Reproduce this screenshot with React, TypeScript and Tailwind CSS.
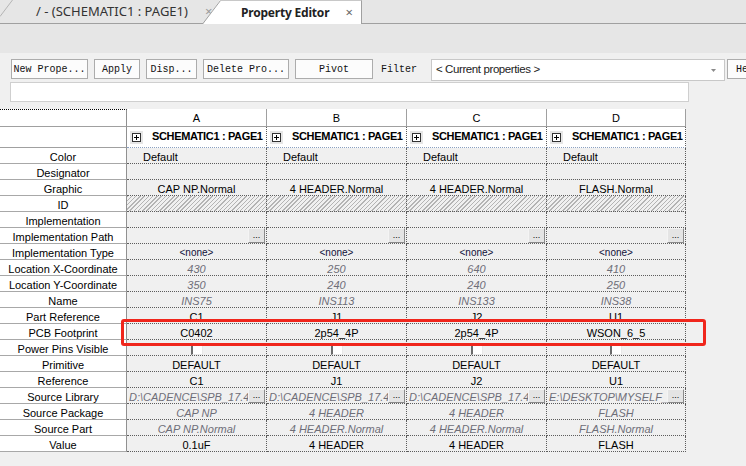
import React from 'react';

type Kind = 'plain' | 'left' | 'gray' | 'none' | 'lib' | 'dots' | 'check' | 'hatch' | 'empty';

type Row = { label: string; kind: Kind; values?: string[] };

const rows: Row[] = [
  { label: 'Color', kind: 'left', values: ['Default', 'Default', 'Default', 'Default'] },
  { label: 'Designator', kind: 'empty' },
  { label: 'Graphic', kind: 'plain', values: ['CAP NP.Normal', '4 HEADER.Normal', '4 HEADER.Normal', 'FLASH.Normal'] },
  { label: 'ID', kind: 'hatch' },
  { label: 'Implementation', kind: 'empty' },
  { label: 'Implementation Path', kind: 'dots' },
  { label: 'Implementation Type', kind: 'none', values: ['<none>', '<none>', '<none>', '<none>'] },
  { label: 'Location X-Coordinate', kind: 'gray', values: ['430', '250', '640', '410'] },
  { label: 'Location Y-Coordinate', kind: 'gray', values: ['350', '240', '240', '250'] },
  { label: 'Name', kind: 'gray', values: ['INS75', 'INS113', 'INS133', 'INS38'] },
  { label: 'Part Reference', kind: 'plain', values: ['C1', 'J1', 'J2', 'U1'] },
  { label: 'PCB Footprint', kind: 'plain', values: ['C0402', '2p54_4P', '2p54_4P', 'WSON_6_5'] },
  { label: 'Power Pins Visible', kind: 'check' },
  { label: 'Primitive', kind: 'plain', values: ['DEFAULT', 'DEFAULT', 'DEFAULT', 'DEFAULT'] },
  { label: 'Reference', kind: 'plain', values: ['C1', 'J1', 'J2', 'U1'] },
  {
    label: 'Source Library',
    kind: 'lib',
    values: ['D:\\CADENCE\\SPB_17.4', 'D:\\CADENCE\\SPB_17.4', 'D:\\CADENCE\\SPB_17.4', 'E:\\DESKTOP\\MYSELF_'],
  },
  { label: 'Source Package', kind: 'gray', values: ['CAP NP', '4 HEADER', '4 HEADER', 'FLASH'] },
  { label: 'Source Part', kind: 'gray', values: ['CAP NP.Normal', '4 HEADER.Normal', '4 HEADER.Normal', 'FLASH.Normal'] },
  { label: 'Value', kind: 'plain', values: ['0.1uF', '4 HEADER', '4 HEADER', 'FLASH'] },
];

const columns = ['A', 'B', 'C', 'D'];

function DotsButton({ small }: { small?: boolean }) {
  return (
    <span
      className={`${small ? 'h-[14px]' : 'h-[15px]'} flex w-[17px] shrink-0 items-end justify-center border border-t-[#f4f4f4] border-l-[#f4f4f4] border-r-[#8a8a8a] border-b-[#8a8a8a] bg-[#e4e4e4] pb-[2px] text-[9px] leading-none text-black`}
    >
      ...
    </span>
  );
}

function ToolButton({ label, width }: { label: string; width: string }) {
  return (
    <div
      className={`${width} flex h-[20px] shrink-0 items-center justify-center border border-[#acacac] bg-[#fcfcfc] text-[10px] whitespace-nowrap text-[#111]`}
    >
      {label}
    </div>
  );
}

function DataCell({ kind, value, last }: { kind: Kind; value?: string; last?: boolean }) {
  const base = `${last ? 'w-[139px]' : 'w-[140px]'} h-4 shrink-0 overflow-hidden border-r border-b border-dotted border-[#5c5c5c] whitespace-nowrap`;

  if (kind === 'hatch') {
    return (
      <div
        className={`${base} bg-[repeating-linear-gradient(135deg,#b4b4b4_0px,#b4b4b4_1px,transparent_1px,transparent_3px)]`}
      />
    );
  }

  if (kind === 'dots') {
    return (
      <div className={`${base} flex items-center justify-end pr-[1px]`}>
        <DotsButton />
      </div>
    );
  }

  if (kind === 'check') {
    return (
      <div className={`${base} flex justify-center pt-[3px]`}>
        <span className="h-[12px] w-[12px] border-t-2 border-l-2 border-r border-b border-t-[#6a6a6a] border-l-[#6a6a6a] border-r-[#e8e8e8] border-b-[#e8e8e8] bg-white" />
      </div>
    );
  }

  if (kind === 'lib') {
    return (
      <div className={`${base} flex items-start pt-px pr-[1px] pl-[2px]`}>
        <span className="min-w-0 flex-1 overflow-hidden italic text-[#6e6e78]">{value}</span>
        <DotsButton small />
      </div>
    );
  }

  if (kind === 'left') {
    return <div className={`${base} pt-px pl-4 text-black`}>{value}</div>;
  }

  if (kind === 'gray') {
    return <div className={`${base} pt-px text-center italic text-[#6e6e78]`}>{value}</div>;
  }

  if (kind === 'none') {
    return <div className={`${base} pt-px text-center text-[10px] text-[#10103a]`}>{value}</div>;
  }

  return <div className={`${base} pt-px text-center text-black`}>{value}</div>;
}

export default function App() {
  return (
    <div className="relative h-[466px] w-[746px] overflow-hidden bg-[#f0f0f0]">
      {/* tab strip */}
      <div className="relative flex h-6 border-b border-[#a0a0a0] bg-[#e6e6e6] font-['Noto_Sans',sans-serif] text-[13px] whitespace-nowrap">
        <div className="relative flex w-[222px] shrink-0 items-center">
          <svg className="absolute top-0 left-0" width="14" height="24" viewBox="0 0 14 24">
            <line x1="0" y1="16.5" x2="12.5" y2="0" stroke="#b4b4b4" strokeWidth="1" />
          </svg>
          <span className="ml-[36px] text-[#333]">/ - (SCHEMATIC1 : PAGE1)</span>
          <span className="ml-[17px] text-[13px] text-[#9a9a9a]">×</span>
        </div>
        <div className="relative -ml-[19px] flex h-6 shrink-0">
          <svg width="19" height="24" viewBox="0 0 19 24" className="shrink-0">
            <polygon points="0,24 17,0 19,0 19,24" fill="#ffffff" />
            <line x1="0" y1="23.5" x2="17.5" y2="0.5" stroke="#a0a0a0" strokeWidth="1" />
            <line x1="17" y1="0.5" x2="19" y2="0.5" stroke="#c8c8c8" strokeWidth="1" />
          </svg>
          <div className="-mb-px flex h-6 w-[140px] shrink-0 items-center border-t border-r border-t-[#c8c8c8] border-r-[#a0a0a0] bg-white">
            <span className="ml-[19px] text-[12px] font-bold tracking-[-0.2px] text-[#222]">Property Editor</span>
            <span className="ml-auto mr-[8px] text-[13px] text-[#666]">×</span>
          </div>
        </div>
      </div>

      {/* band */}
      <div className="h-[29px] bg-[#e6e6e6]" />

      {/* toolbar */}
      <div className="pt-[6px] font-['Liberation_Mono',monospace]">
        <div className="flex h-[22px] items-start gap-[6px] pl-[11px]">
          <ToolButton label="New Prope..." width="w-[77px]" />
          <ToolButton label="Apply" width="w-[46px]" />
          <ToolButton label="Disp..." width="w-[51px]" />
          <ToolButton label="Delete Pro..." width="w-[86px]" />
          <ToolButton label="Pivot" width="w-[78px]" />
          <span className="ml-[2px] flex h-[20px] w-[42px] shrink-0 items-center text-[10px] text-[#111]">Filter</span>
          <div className="ml-[2px] flex h-[22px] w-[294px] shrink-0 items-center border border-[#c8c8c8] bg-white pl-[4px] font-['Liberation_Sans',sans-serif] text-[11.5px] tracking-[-0.4px] whitespace-nowrap text-[#222]">
            <span>&lt; Current properties &gt;</span>
            <svg className="mr-[8px] ml-auto" width="5" height="3" viewBox="0 0 5 3">
              <polygon points="0,0 5,0 2.5,3" fill="#8a8a8a" />
            </svg>
          </div>
          <div className="-ml-[4px] flex h-[20px] w-[40px] shrink-0 items-center border border-[#acacac] bg-[#fcfcfc] pl-[8px] text-[10px] text-[#111]">
            Help
          </div>
        </div>
        <div className="mt-[1px] ml-[10px] h-[20px] w-[679px] border border-[#cfcfcf] bg-white" />
      </div>

      {/* property grid */}
      <div className="mt-[7px] w-[687px] font-['Liberation_Sans',Arial,sans-serif] text-[11px] leading-[16px]">
        <div className="flex h-[18px]">
          <div className="h-[18px] w-[127px] shrink-0 border-t border-r border-b border-dotted border-t-black border-r-[#909090] border-b-[#a0a0a0] bg-white [border-right-style:solid] [border-bottom-style:solid]" />
          {columns.map((c, i) => (
            <div
              key={c}
              className={`${i === 3 ? 'w-[139px]' : 'w-[140px]'} flex h-[18px] shrink-0 items-center justify-center border-r border-b border-[#a0a0a0] bg-white text-black`}
            >
              {c}
            </div>
          ))}
        </div>
        <div className="flex h-[21px]">
          <div className="h-[21px] w-[127px] shrink-0 border-r border-b border-r-[#909090] border-b-[#a0a0a0] bg-white" />
          {columns.map((c, i) => (
            <div
              key={c}
              className={`${i === 3 ? 'w-[139px]' : 'w-[140px]'} flex h-[21px] shrink-0 overflow-hidden border-r border-b border-dotted border-r-[#5c5c5c] border-b-[#8aa0c0] bg-white whitespace-nowrap`}
            >
              <span className="mt-[4px] ml-[3px] flex h-[13px] w-[13px] shrink-0 items-center justify-center bg-[#e6e6e6]">
                <svg width="9" height="9" viewBox="0 0 9 9">
                  <rect x="0.5" y="0.5" width="8" height="8" fill="#fff" stroke="#333" />
                  <line x1="2" y1="4.5" x2="7" y2="4.5" stroke="#000" />
                  <line x1="4.5" y1="2" x2="4.5" y2="7" stroke="#000" />
                </svg>
              </span>
              <span className="mt-[1px] ml-[9px] font-bold tracking-[-0.35px] text-black">SCHEMATIC1 : PAGE1</span>
            </div>
          ))}
        </div>
        {rows.map((row) => (
          <div key={row.label} className="flex h-4">
            <div className="h-4 w-[127px] shrink-0 border-r border-b border-r-[#909090] border-b-[#a8a8a8] bg-white pt-px text-center whitespace-nowrap text-black">
              {row.label}
            </div>
            {columns.map((c, i) => (
              <DataCell key={c} kind={row.kind} value={row.values?.[i]} last={i === 3} />
            ))}
          </div>
        ))}
      </div>

      {/* highlight box */}
      <div className="absolute top-[319px] left-[121px] h-[27px] w-[585px] rounded-[3px] border-[3px] border-[#f0261c]" />
    </div>
  );
}
